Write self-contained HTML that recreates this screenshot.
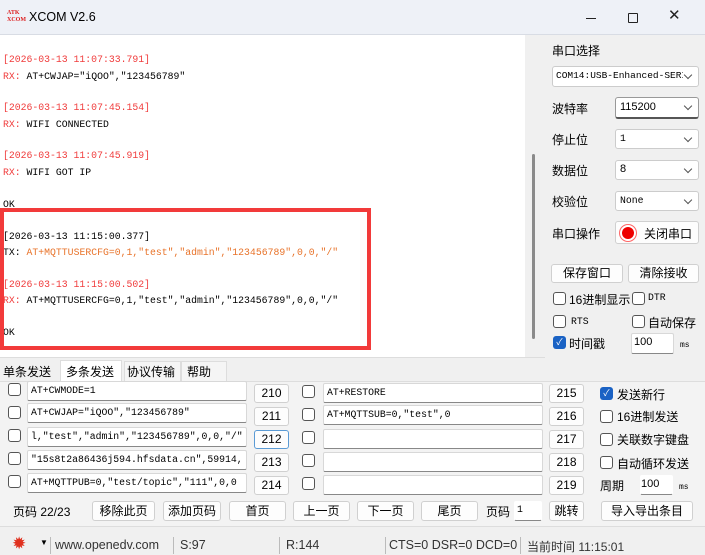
<!DOCTYPE html>
<html><head><meta charset="utf-8">
<style>
*{box-sizing:border-box;margin:0;padding:0}
body{width:705px;height:555px;overflow:hidden;background:#f0f0f0;font-family:"Liberation Sans","Noto Sans CJK SC",sans-serif;font-size:12px;color:#000;position:relative}
.a{position:absolute;white-space:nowrap}
.mono{font-family:"Liberation Mono","Noto Sans CJK SC",monospace;font-size:9.8px}
.red{color:#f03c3c}
.org{color:#e8732a}
.box{position:absolute;background:#fff;border:1px solid #d8d8d8;border-bottom:1px solid #888;border-radius:2px}
.btn{position:absolute;background:#fdfdfd;border:1px solid #d0d0d0;border-radius:3px;text-align:center;font-size:12px}
.cb{position:absolute;width:13px;height:13px;border:1px solid #555;border-radius:3px;background:#fff}
.cbc{position:absolute;width:13px;height:13px;border-radius:3px;background:#1a62c4;color:#fff;font-size:9px;line-height:13px;text-align:center}
.sel{position:absolute;background:#fff;border:1px solid #ccc;border-radius:3px}
.sel:after{content:"";position:absolute;right:7px;top:5px;width:5px;height:5px;border-right:1px solid #555;border-bottom:1px solid #555;transform:rotate(45deg)}
</style></head><body>
<!-- title bar -->
<div class="a" style="left:0;top:0;width:705px;height:35px;background:#eef1f7;border-bottom:1px solid #d8dce4"></div>
<div class="a" style="left:7px;top:10px;width:16px;height:15px;font-size:6px;line-height:7px;color:#d22;font-weight:bold;font-family:'Liberation Serif',serif">ATK<br>XCOM</div>
<div class="a" style="left:29px;top:10px;font-size:12.5px">XCOM V2.6</div>
<div class="a" style="left:586px;top:18px;width:10px;height:1px;background:#222"></div>
<div class="a" style="left:628px;top:13px;width:10px;height:10px;border:1px solid #222;border-radius:1px"></div>
<div class="a" style="left:668px;top:6px;font-size:15px;color:#222">✕</div>
<!-- text area -->
<div class="a" style="left:0;top:35px;width:526px;height:322px;background:#fff"></div>
<div class="a" style="left:525px;top:35px;width:17px;height:322px;background:#f0f0f0"></div>
<div class="a" style="left:532px;top:154px;width:3px;height:185px;background:#8a8a8a;border-radius:2px"></div>
<div class="a" style="left:0;top:357px;width:545px;height:1px;background:#ddd"></div>
<div class="mono">
<div class="a red" style="left:3px;top:54px">[2026-03-13 11:07:33.791]</div>
<div class="a" style="left:3px;top:71px"><span class="red">RX:</span> AT+CWJAP="iQOO","123456789"</div>
<div class="a red" style="left:3px;top:102px">[2026-03-13 11:07:45.154]</div>
<div class="a" style="left:3px;top:119px"><span class="red">RX:</span> WIFI CONNECTED</div>
<div class="a red" style="left:3px;top:150px">[2026-03-13 11:07:45.919]</div>
<div class="a" style="left:3px;top:167px"><span class="red">RX:</span> WIFI GOT IP</div>
<div class="a" style="left:3px;top:199px">OK</div>
<div class="a" style="left:3px;top:231px">[2026-03-13 11:15:00.377]</div>
<div class="a" style="left:3px;top:247px">TX: <span class="org">AT+MQTTUSERCFG=0,1,"test","admin","123456789",0,0,"/"</span></div>
<div class="a red" style="left:3px;top:279px">[2026-03-13 11:15:00.502]</div>
<div class="a" style="left:3px;top:295px"><span class="red">RX:</span> AT+MQTTUSERCFG=0,1,"test","admin","123456789",0,0,"/"</div>
<div class="a" style="left:3px;top:327px">OK</div>
</div>
<div class="a" style="left:0;top:208px;width:371px;height:142px;border:4px solid #f23a3a"></div>
<!-- right panel -->
<div class="a" style="left:552px;top:42px">串口选择</div>
<div class="sel" style="left:552px;top:66px;width:147px;height:21px"></div>
<div class="a mono" style="left:556px;top:70px;font-size:9.5px;width:127px;overflow:hidden">COM14:USB-Enhanced-SERIAL</div>
<div class="a" style="left:552px;top:100px">波特率</div>
<div class="sel" style="left:615px;top:97px;width:84px;height:22px;border-color:#999;border-bottom:2px solid #555"></div>
<div class="a" style="left:620px;top:101px;font-size:11px">115200</div>
<div class="a" style="left:552px;top:131px">停止位</div>
<div class="sel" style="left:615px;top:129px;width:84px;height:20px"></div>
<div class="a mono" style="left:620px;top:133px">1</div>
<div class="a" style="left:552px;top:162px">数据位</div>
<div class="sel" style="left:615px;top:160px;width:84px;height:20px"></div>
<div class="a" style="left:620px;top:163px;font-size:11px">8</div>
<div class="a" style="left:552px;top:193px">校验位</div>
<div class="sel" style="left:615px;top:191px;width:84px;height:20px"></div>
<div class="a mono" style="left:620px;top:195px">None</div>
<div class="a" style="left:552px;top:225px">串口操作</div>
<div class="btn" style="left:615px;top:221px;width:84px;height:23px"></div>
<div class="a" style="left:622px;top:227px;width:12px;height:12px;border-radius:50%;background:#e00;box-shadow:0 0 0 2px #fff,0 0 0 3px #f66"></div>
<div class="a" style="left:644px;top:225px">关闭串口</div>
<div class="btn" style="left:551px;top:264px;width:72px;height:19px;line-height:17px">保存窗口</div>
<div class="btn" style="left:628px;top:264px;width:71px;height:19px;line-height:17px">清除接收</div>
<div class="cb" style="left:553px;top:292px"></div>
<div class="a" style="left:569px;top:291px">16进制显示</div>
<div class="cb" style="left:632px;top:292px"></div>
<div class="a mono" style="left:648px;top:292px">DTR</div>
<div class="cb" style="left:553px;top:315px"></div>
<div class="a mono" style="left:571px;top:316px">RTS</div>
<div class="cb" style="left:632px;top:315px"></div>
<div class="a" style="left:648px;top:314px">自动保存</div>
<div class="cbc" style="left:553px;top:336px">✓</div>
<div class="a" style="left:569px;top:335px">时间戳</div>
<div class="box" style="left:631px;top:333px;width:43px;height:21px"></div>
<div class="a" style="left:634px;top:336px;font-size:11px">100</div>
<div class="a mono" style="left:680px;top:341px;font-size:8px">ms</div>
<!-- tabs -->
<div class="a" style="left:3px;top:363px">单条发送</div>
<div class="a" style="left:60px;top:360px;width:62px;height:22px;background:#fff;border:1px solid #ddd;border-bottom:none"></div>
<div class="a" style="left:66px;top:363px">多条发送</div>
<div class="a" style="left:124px;top:361px;width:57px;height:20px;background:#f5f5f5;border:1px solid #ddd;border-bottom:none"></div>
<div class="a" style="left:127px;top:363px">协议传输</div>
<div class="a" style="left:181px;top:361px;width:46px;height:20px;background:#f5f5f5;border:1px solid #ddd;border-bottom:none"></div>
<div class="a" style="left:187px;top:363px">帮助</div>
<div class="a" style="left:0;top:381px;width:705px;height:146px;background:#f3f3f3;border-top:1px solid #ddd;border-bottom:1px solid #ddd"></div>
<!-- rows -->
<div class="cb" style="left:8px;top:383px"></div><div class="box" style="left:27px;top:381px;width:220px;height:20px"></div><div class="a mono" style="left:31px;top:385px">AT+CWMODE=1</div><div class="btn" style="left:254px;top:384px;width:35px;height:19px;line-height:17px">210</div>
<div class="cb" style="left:8px;top:406px"></div><div class="box" style="left:27px;top:403px;width:220px;height:20px"></div><div class="a mono" style="left:31px;top:407px">AT+CWJAP="iQOO","123456789"</div><div class="btn" style="left:254px;top:407px;width:35px;height:19px;line-height:17px">211</div>
<div class="cb" style="left:8px;top:429px"></div><div class="box" style="left:27px;top:427px;width:220px;height:20px"></div><div class="a mono" style="left:31px;top:431px">l,"test","admin","123456789",0,0,"/"</div><div class="btn" style="left:254px;top:430px;width:35px;height:19px;line-height:17px;border-color:#5b9bd5">212</div>
<div class="cb" style="left:8px;top:452px"></div><div class="box" style="left:27px;top:450px;width:220px;height:20px"></div><div class="a mono" style="left:31px;top:454px">"15s8t2a86436j594.hfsdata.cn",59914,</div><div class="btn" style="left:254px;top:453px;width:35px;height:19px;line-height:17px">213</div>
<div class="cb" style="left:8px;top:475px"></div><div class="box" style="left:27px;top:473px;width:220px;height:20px"></div><div class="a mono" style="left:31px;top:477px">AT+MQTTPUB=0,"test/topic","111",0,0</div><div class="btn" style="left:254px;top:476px;width:35px;height:19px;line-height:17px">214</div>

<div class="cb" style="left:302px;top:385px"></div><div class="box" style="left:323px;top:383px;width:220px;height:20px"></div><div class="a mono" style="left:327px;top:387px">AT+RESTORE</div><div class="btn" style="left:549px;top:384px;width:35px;height:19px;line-height:17px">215</div>
<div class="cb" style="left:302px;top:408px"></div><div class="box" style="left:323px;top:405px;width:220px;height:20px"></div><div class="a mono" style="left:327px;top:409px">AT+MQTTSUB=0,"test",0</div><div class="btn" style="left:549px;top:407px;width:35px;height:19px;line-height:17px">216</div>
<div class="cb" style="left:302px;top:431px"></div><div class="box" style="left:323px;top:429px;width:220px;height:20px"></div><div class="btn" style="left:549px;top:430px;width:35px;height:19px;line-height:17px">217</div>
<div class="cb" style="left:302px;top:454px"></div><div class="box" style="left:323px;top:452px;width:220px;height:20px"></div><div class="btn" style="left:549px;top:453px;width:35px;height:19px;line-height:17px">218</div>
<div class="cb" style="left:302px;top:477px"></div><div class="box" style="left:323px;top:475px;width:220px;height:20px"></div><div class="btn" style="left:549px;top:476px;width:35px;height:19px;line-height:17px">219</div>

<div class="cbc" style="left:600px;top:387px">✓</div><div class="a" style="left:617px;top:386px">发送新行</div>
<div class="cb" style="left:600px;top:410px"></div><div class="a" style="left:617px;top:408px">16进制发送</div>
<div class="cb" style="left:600px;top:433px"></div><div class="a" style="left:617px;top:431px">关联数字键盘</div>
<div class="cb" style="left:600px;top:456px"></div><div class="a" style="left:617px;top:455px">自动循环发送</div>
<div class="a" style="left:600px;top:477px">周期</div>
<div class="box" style="left:640px;top:475px;width:33px;height:20px;border-color:#fff;border-bottom-color:#888"></div>
<div class="a" style="left:641px;top:478px;font-size:11px">100</div>
<div class="a mono" style="left:679px;top:483px;font-size:8px">ms</div>
<!-- page buttons -->
<div class="a" style="left:13px;top:503px">页码 22/23</div>
<div class="btn" style="left:92px;top:501px;width:63px;height:20px;line-height:18px">移除此页</div>
<div class="btn" style="left:163px;top:501px;width:58px;height:20px;line-height:18px">添加页码</div>
<div class="btn" style="left:229px;top:501px;width:57px;height:20px;line-height:18px">首页</div>
<div class="btn" style="left:293px;top:501px;width:57px;height:20px;line-height:18px">上一页</div>
<div class="btn" style="left:357px;top:501px;width:57px;height:20px;line-height:18px">下一页</div>
<div class="btn" style="left:421px;top:501px;width:57px;height:20px;line-height:18px">尾页</div>
<div class="a" style="left:486px;top:503px">页码</div>
<div class="box" style="left:514px;top:501px;width:28px;height:20px;border-color:#fff;border-bottom-color:#888"></div>
<div class="a mono" style="left:517px;top:504px">1</div>
<div class="btn" style="left:549px;top:501px;width:35px;height:20px;line-height:18px">跳转</div>
<div class="btn" style="left:601px;top:501px;width:92px;height:20px;line-height:18px">导入导出条目</div>
<!-- status bar -->
<div class="a" style="left:12px;top:534px;font-size:17px;color:#e0301e;line-height:20px">✹</div>
<div class="a" style="left:40px;top:538px;font-size:8px">▼</div>
<div class="a" style="left:50px;top:537px;width:1px;height:17px;background:#bbb"></div>
<div class="a" style="left:55px;top:538px;font-size:12.5px;color:#333">www.openedv.com</div>
<div class="a" style="left:173px;top:537px;width:1px;height:17px;background:#bbb"></div>
<div class="a" style="left:180px;top:538px;font-size:12.5px;color:#333">S:97</div>
<div class="a" style="left:279px;top:537px;width:1px;height:17px;background:#bbb"></div>
<div class="a" style="left:286px;top:538px;font-size:12.5px;color:#333">R:144</div>
<div class="a" style="left:385px;top:537px;width:1px;height:17px;background:#bbb"></div>
<div class="a" style="left:389px;top:538px;font-size:12.5px;color:#333">CTS=0 DSR=0 DCD=0</div>
<div class="a" style="left:520px;top:537px;width:1px;height:17px;background:#bbb"></div>
<div class="a" style="left:527px;top:538px;font-size:12px;color:#333">当前时间 11:15:01</div>
</body></html>
